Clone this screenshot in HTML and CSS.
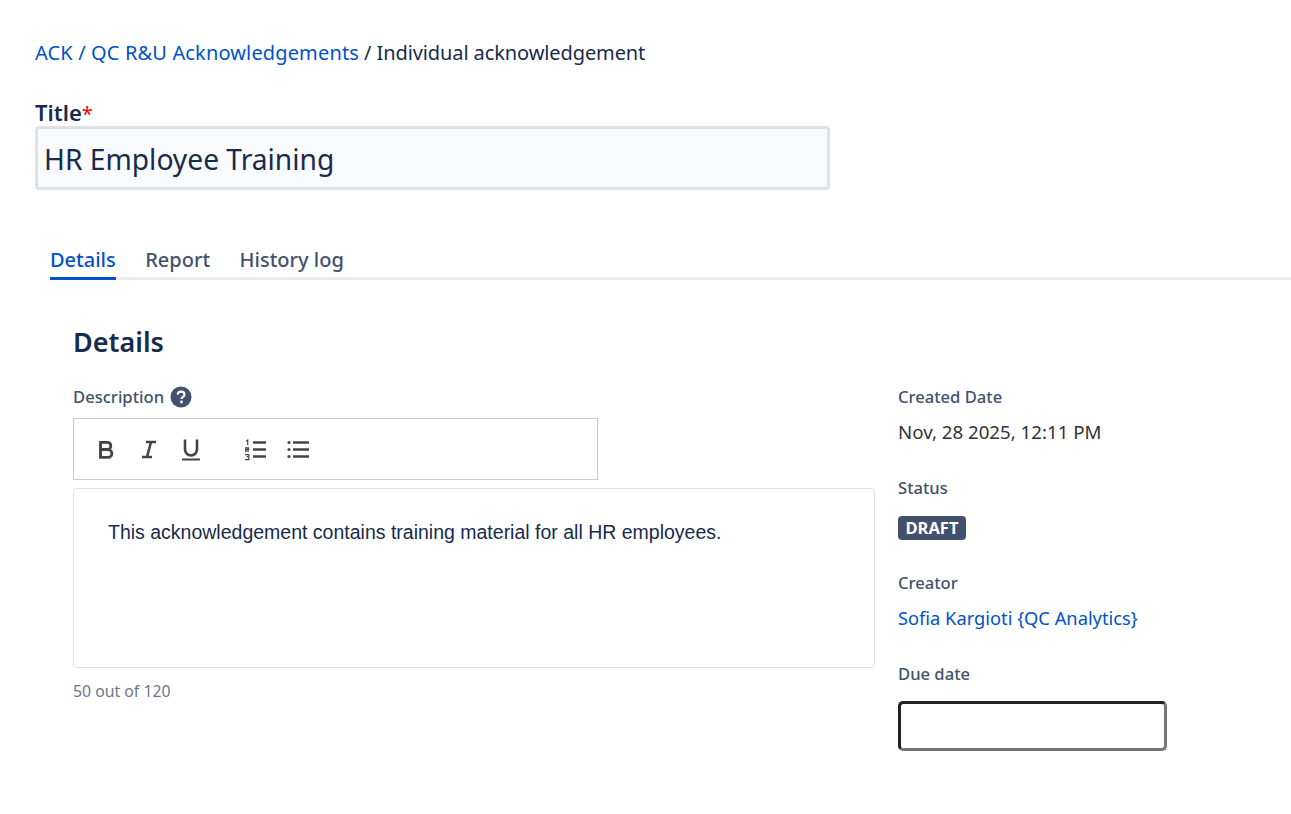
FILE: index.html
```html
<!DOCTYPE html>
<html>
<head>
  <title>Individual acknowledgement</title>
  <link rel="stylesheet" href="styles.css">
</head>
<body>
  <div class="breadcrumb">
    <a href="#">ACK / QC R&amp;U Acknowledgements</a> / Individual acknowledgement
  </div>

  <div class="title-group">
    <label class="title-label" for="title">Title<span class="required">*</span></label>
    <input class="title-input" id="title" type="text" value="HR Employee Training">
  </div>

  <div class="tabs">
    <a class="tab active" href="#">Details</a>
    <a class="tab" href="#">Report</a>
    <a class="tab" href="#">History log</a>
  </div>

  <div class="panel">
    <h2>Details</h2>
    <div class="columns">
      <div class="main-col">
        <div class="field-label desc-label">
          Description
          <svg class="help" width="22" height="22" viewBox="0 0 22 22">
            <circle cx="11" cy="11" r="10.5" fill="#42526e"/>
            <path d="M7.6 8.6c.2-1.9 1.6-3 3.5-3 2 0 3.4 1.1 3.4 2.8 0 1.2-.6 1.9-1.7 2.6-1 .6-1.3 1-1.3 2" fill="none" stroke="#fff" stroke-width="2.2"/>
            <circle cx="11.5" cy="16" r="1.4" fill="#fff"/>
          </svg>
        </div>
        <div class="toolbar">
          <svg class="tool" width="24" height="24" viewBox="0 0 24 24">
            <path d="M6.5 5.3h6.7a3.6 3.6 0 0 1 0 7.2H6.5zM6.5 12.5h7.5a3.9 3.9 0 0 1 0 7.8H6.5z" fill="none" stroke="#444" stroke-width="2.8"/>
          </svg>
          <svg class="tool" width="24" height="24" viewBox="0 0 24 24">
            <path d="M9 5h10M5 20h10M14 5l-4 15" fill="none" stroke="#444" stroke-width="2.6"/>
          </svg>
          <svg class="tool" width="24" height="24" viewBox="0 0 24 24">
            <path d="M6 2.5v10a6 6 0 0 0 12 0v-10" fill="none" stroke="#444" stroke-width="2.6"/>
            <path d="M3 22.5h18" stroke="#444" stroke-width="2"/>
          </svg>
          <svg class="tool list-first" width="24" height="24" viewBox="0 0 24 24">
            <path d="M10 5.5h13M10 12.5h13M10 19.5h13" stroke="#444" stroke-width="2.6"/>
            <path d="M3.2 4l1.5-1v5M2 10.8h3.6v1.6H2.6v1.8h3.4M2 17.6h3.8v2H3.6h2.2v3H2" fill="none" stroke="#444" stroke-width="1.2"/>
          </svg>
          <svg class="tool" width="24" height="24" viewBox="0 0 24 24">
            <path d="M7 5.5h16M7 12.5h16M7 19.5h16" stroke="#444" stroke-width="2.6"/>
            <circle cx="3" cy="5.5" r="1.6" fill="#444"/>
            <circle cx="3" cy="12.5" r="1.6" fill="#444"/>
            <circle cx="3" cy="19.5" r="1.6" fill="#444"/>
          </svg>
        </div>
        <div class="editor">This acknowledgement contains training material for all HR employees.</div>
        <div class="counter">50 out of 120</div>
      </div>

      <div class="side-col">
        <div class="side-field">
          <div class="field-label">Created Date</div>
          <div class="value">Nov, 28 2025, 12:11 PM</div>
        </div>
        <div class="side-field">
          <div class="field-label">Status</div>
          <span class="badge">DRAFT</span>
        </div>
        <div class="side-field">
          <div class="field-label">Creator</div>
          <a class="value link" href="#">Sofia Kargioti {QC Analytics}</a>
        </div>
        <div class="side-field">
          <div class="field-label">Due date</div>
          <input class="due-input" type="text">
        </div>
      </div>
    </div>
  </div>
</body>
</html>
```

FILE: styles.css
```css
body {
  font-family: "Noto Sans", "Open Sans", sans-serif;
  margin: 0;
  padding: 40px 0 0 35px;
  color: #172b4d;
  background: #fff;
}
a {
  color: #0052cc;
  text-decoration: none;
}
.breadcrumb {
  font-size: 20px;
  line-height: 26px;
  letter-spacing: -0.1px;
}
.breadcrumb a {
  letter-spacing: 0.14px;
}
.title-group {
  margin-top: 33px;
}
.title-label {
  display: block;
  font-size: 22px;
  font-weight: 600;
  line-height: 26px;
  padding-bottom: 1px;
}
.required {
  color: #e00;
  font-size: 20px;
  font-weight: 400;
  line-height: 1;
}
.title-input {
  display: block;
  box-sizing: border-box;
  width: 795px;
  height: 64px;
  padding: 2px 6px 0;
  margin: 0;
  font-family: inherit;
  font-size: 28.2px;
  color: #172b4d;
  background: #f9fafc;
  border: 3px solid #dfe1e6;
  border-radius: 4px;
}
.tabs {
  display: flex;
  gap: 29.5px;
  margin: 55px 0 0 15px;
  border-bottom: 3px solid #ebecf0;
}
.tab {
  font-size: 20px;
  font-weight: 500;
  line-height: 28px;
  padding: 1px 0 3px;
  margin-bottom: -3px;
  color: #42526e;
  border-bottom: 3px solid transparent;
}
.tab.active {
  color: #0052cc;
  border-bottom-color: #0052cc;
}
.panel {
  padding: 43px 0 0 38px;
}
h2 {
  margin: 0;
  font-size: 27px;
  font-weight: 600;
  line-height: 38px;
}
.columns {
  display: flex;
  margin-top: 25px;
}
.main-col {
  width: 802px;
  margin-right: 23px;
}
.field-label {
  font-size: 16.6px;
  font-weight: 500;
  line-height: 22px;
  color: #42526e;
}
.desc-label {
  display: flex;
  align-items: center;
  gap: 6px;
}
.toolbar {
  display: flex;
  align-items: center;
  box-sizing: border-box;
  width: 525px;
  height: 62px;
  margin-top: 10px;
  padding-left: 20px;
  gap: 18.5px;
  border: 1px solid #ccc;
}
.list-first {
  margin-left: 21.5px;
}
.editor {
  box-sizing: border-box;
  height: 180px;
  margin-top: 8px;
  padding: 30px 34px;
  font-family: "Liberation Sans", Arial, sans-serif;
  font-size: 19.5px;
  line-height: 26px;
  border: 1px solid #dfe1e6;
  border-radius: 4px;
}
.counter {
  margin-top: 12px;
  font-size: 15.8px;
  line-height: 22px;
  color: #6b778c;
}
.side-col {
  flex: 1;
}
.side-field {
  margin-bottom: 32px;
}
.value {
  display: block;
  margin-top: 11px;
  font-size: 18.7px;
  line-height: 26px;
  color: #333;
}
.value.link {
  font-size: 18.3px;
  color: #0052cc;
}
.badge {
  display: inline-block;
  margin-top: 17px;
  padding: 0 7.5px;
  font-size: 16.5px;
  font-weight: 700;
  line-height: 24px;
  color: #fff;
  background: #42526e;
  border-radius: 4px;
}
.due-input {
  display: block;
  box-sizing: border-box;
  width: 269px;
  height: 50px;
  margin-top: 16px;
  border: 3px solid;
  border-color: #222 #767676 #767676 #222;
  border-radius: 5px;
  background: #fff;
}
```
